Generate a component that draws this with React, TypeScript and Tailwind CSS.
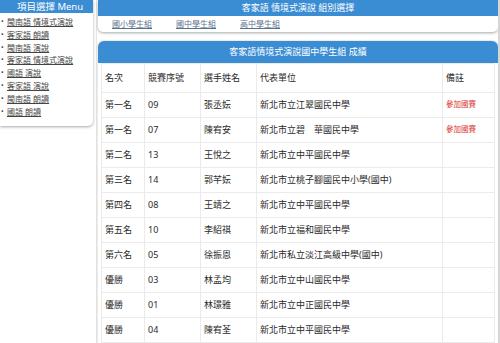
const menuItems = [
    '閩南語 情境式演說',
    '客家語 朗讀',
    '閩南語 演說',
    '客家語 情境式演說',
    '國語 演說',
    '客家語 演說',
    '閩南語 朗讀',
    '國語 朗讀',
];

const groups = ['國小學生組', '國中學生組', '高中學生組'];

type Row = {
    rank: string;
    no: string;
    name: string;
    school: string;
    note?: string;
};

const rows: Row[] = [
    { rank: '第一名', no: '09', name: '張丞妘', school: '新北市立江翠國民中學', note: '參加國賽' },
    { rank: '第一名', no: '07', name: '陳宥安', school: '新北市立碧　華國民中學', note: '參加國賽' },
    { rank: '第二名', no: '13', name: '王悅之', school: '新北市立中平國民中學' },
    { rank: '第三名', no: '14', name: '郭芊妘', school: '新北市立桃子腳國民中小學(國中)' },
    { rank: '第四名', no: '08', name: '王靖之', school: '新北市立中平國民中學' },
    { rank: '第五名', no: '10', name: '李紹祺', school: '新北市立福和國民中學' },
    { rank: '第六名', no: '05', name: '徐振恩', school: '新北市私立淡江高級中學(國中)' },
    { rank: '優勝', no: '03', name: '林孟均', school: '新北市立中山國民中學' },
    { rank: '優勝', no: '01', name: '林璟雅', school: '新北市立中正國民中學' },
    { rank: '優勝', no: '04', name: '陳宥荃', school: '新北市立中平國民中學' },
];

const cell = 'border border-[#ebebeb] pl-[3px] text-left font-normal';

export default function App() {
    return (
        <div className="flex h-[343px] w-[500px] overflow-hidden bg-white font-['Noto_Sans','Noto_Sans_CJK_TC',sans-serif] text-[#2a2a2a]">
            {/* Menu */}
            <div className="w-[97px] shrink-0 border-r border-[#e6e6e6]">
                <div className="w-[93px] rounded-br-[5px] bg-white shadow-[0_1px_3px_rgba(0,0,0,0.35)]">
                    <div className="h-[13px] bg-[#3a8dd3] pl-[7px] text-center text-[9.5px] leading-[13px] text-white">
                        項目選擇 Menu
                    </div>
                    <ul className="pt-[3px] pb-[8px]">
                        {menuItems.map((m) => (
                            <li
                                key={m}
                                className="flex items-center text-[8px] leading-[12.8px] text-[#444]"
                            >
                                <span className="w-[7px] pl-[1px] text-[7px]">•</span>
                                <a href="#" className="underline">
                                    {m}
                                </a>
                            </li>
                        ))}
                    </ul>
                </div>
            </div>

            {/* Main */}
            <div className="flex flex-1 flex-col pl-[1px]">
                <div className="rounded-b-[5px] bg-white shadow-[0_1px_3px_rgba(0,0,0,0.35)]">
                    <div className="h-[16px] bg-[#3a8dd3] text-center text-[9px] leading-[16px] text-white">
                        客家語 情境式演說 組別選擇
                    </div>
                    <div className="flex h-[16px] items-center gap-[24px] pl-[14px] text-[8px]">
                        {groups.map((g) => (
                            <a key={g} href="#" className="text-[#5d6f8f] underline">
                                {g}
                            </a>
                        ))}
                    </div>
                </div>

                <div className="mt-[9px] flex-1 rounded-t-[6px] bg-white shadow-[0_0_2px_rgba(0,0,0,0.3)]">
                    <div className="h-[22px] rounded-t-[6px] bg-[#3a8dd3] text-center text-[9px] leading-[22px] text-white">
                        客家語情境式演說國中學生組 成績
                    </div>
                    <div className="px-[3px]">
                        <table className="w-[393px] table-fixed border-collapse text-[9px]">
                            <colgroup>
                                <col className="w-[43px]" />
                                <col className="w-[56px]" />
                                <col className="w-[56px]" />
                                <col className="w-[186px]" />
                                <col className="w-[52px]" />
                            </colgroup>
                            <thead>
                                <tr className="h-[29px]">
                                    <th className={cell}>名次</th>
                                    <th className={cell}>競賽序號</th>
                                    <th className={cell}>選手姓名</th>
                                    <th className={cell}>代表單位</th>
                                    <th className={cell}>備註</th>
                                </tr>
                            </thead>
                            <tbody>
                                {rows.map((r, i) => (
                                    <tr key={i} className="h-[25px]">
                                        <td className={cell}>{r.rank}</td>
                                        <td className={cell}>{r.no}</td>
                                        <td className={cell}>{r.name}</td>
                                        <td className={cell}>{r.school}</td>
                                        <td className={`${cell} text-[7.5px] text-[#d9302c]`}>
                                            {r.note}
                                        </td>
                                    </tr>
                                ))}
                            </tbody>
                        </table>
                    </div>
                </div>
            </div>

            <div className="w-[3px] shrink-0 bg-[#d6d6d6]" />
        </div>
    );
}
